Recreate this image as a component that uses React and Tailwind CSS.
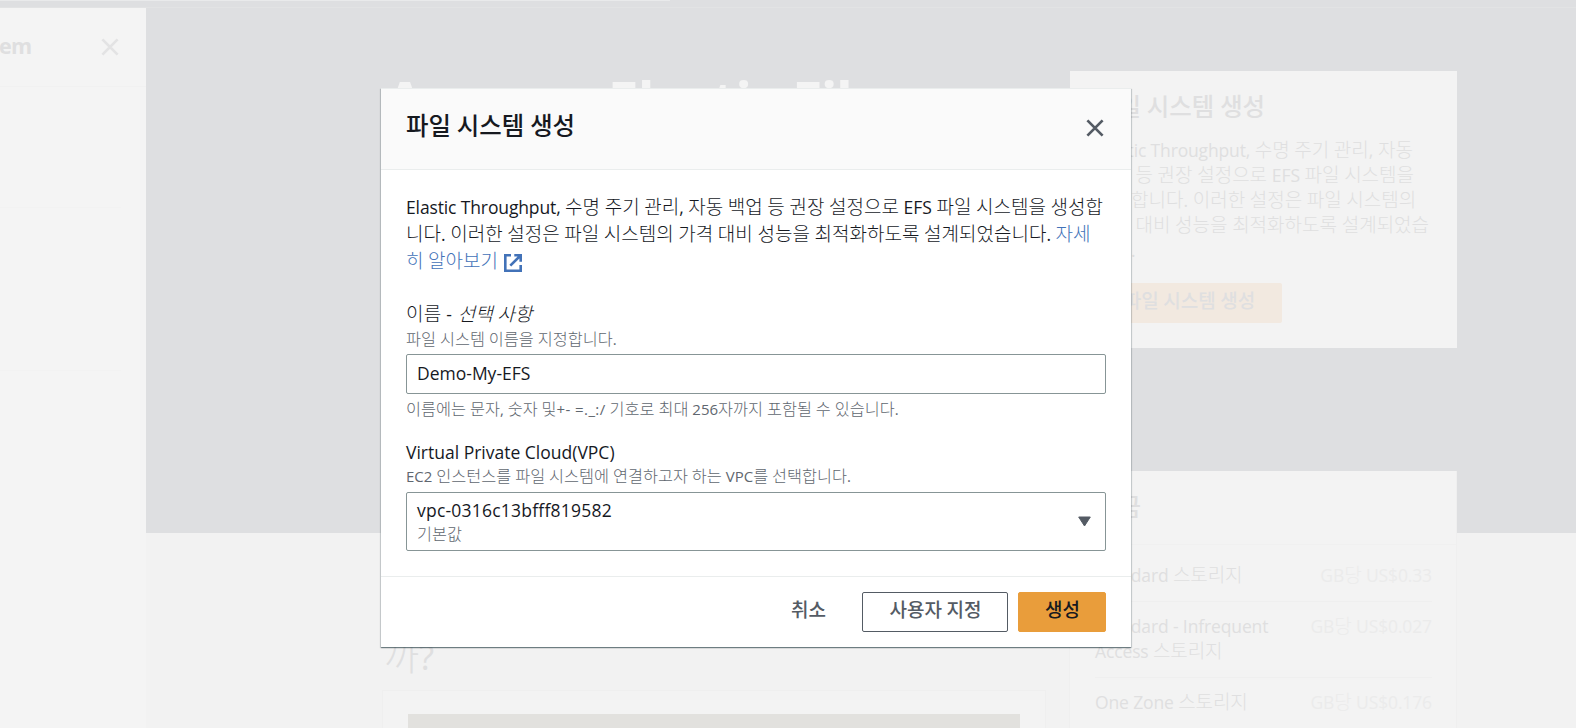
import React from 'react';

const HANGUL = /([\uac00-\ud7a3]+)/;

// Sets Hangul runs in a slightly larger CJK face so they balance with the Latin text.
function T({ children, bold = false }) {
  return children.split(HANGUL).map((run, i) =>
    HANGUL.test(run) ? (
      <span
        key={i}
        className={
          bold
            ? "font-['Noto_Sans_CJK_KR',sans-serif] text-[1.087em] leading-[0] font-medium"
            : "font-['Noto_Sans_CJK_KR',sans-serif] text-[1.087em] leading-[0] font-light"
        }
      >
        {run}
      </span>
    ) : (
      run
    )
  );
}

function CloseIcon({ className }) {
  return (
    <svg viewBox="0 0 18 18" className={className} fill="none" stroke="currentColor" strokeWidth="2.7">
      <path d="M1.4 1.4l15.2 15.2M16.6 1.4L1.4 16.6" />
    </svg>
  );
}

function ExternalIcon() {
  return (
    <svg viewBox="0 0 18 18" className="mt-[3px] ml-[6px] h-[18px] w-[18px] shrink-0" fill="none" stroke="#4272b8" strokeWidth="2.6">
      <path d="M7 1.3H1.3v15.4h15.4V11M10.3 1.3h6.4v6.4M16.5 1.5L6.3 11.7" />
    </svg>
  );
}

const INTRO = [
  '백업 등 권장 설정으로 EFS 파일 시스템을',
  '생성합니다. 이러한 설정은 파일 시스템의',
  '가격 대비 성능을 최적화하도록 설계되었습',
  '니다.',
];

function Background() {
  return (
    <div className="flex h-full flex-col">
      <div className="h-2 shrink-0 border-b border-[#e2e3e4] bg-[#dedfe1]">
        <div className="h-px w-[670px] bg-[#e9eaeb]" />
      </div>
      <div className="flex min-h-0 flex-1">
        <aside className="w-[146px] shrink-0 bg-[#f4f4f4] text-[#dfdfe0]">
          <div className="flex h-[79px] items-start justify-between border-b border-[#f1f1f1] pr-[27px]">
            <span className="mt-[23px] -ml-px text-[21.5px] leading-[30px] font-bold tracking-[-0.6px]">em</span>
            <CloseIcon className="mt-[30px] h-[18px] w-[18px] text-[#e3e3e4]" />
          </div>
          <div className="h-[121px] w-[121px] border-b border-[#f2f2f2]" />
          <div className="h-[163px] w-[121px] border-b border-[#f2f2f2]" />
        </aside>
        <main className="min-w-0 flex-1 bg-[linear-gradient(#dedfe1_525px,#f2f2f2_525px)]">
          <div className="flex pl-[236px]">
            <section className="w-[664px] shrink-0">
              <h1 className="pt-[61px] pl-[4px] text-[55px] leading-[64px] font-bold tracking-[-0.9px] whitespace-nowrap text-[#f4f4f4]">
                <span className="tracking-[-2.1px]">Amazon </span>
                Elastic <span className="tracking-[-1.5px]">File</span>
              </h1>
              <h2 className="mt-[501px] pl-[2px] text-[35px] leading-[46px] text-[#dfdfe0]">
                <T>까?</T>
              </h2>
              <div className="mt-[10px] h-[60px] border border-[#efefef] bg-[#f3f3f3] px-[25px] pt-[23px]">
                <div className="h-[40px] w-[612px] bg-[#e2e1de]" />
              </div>
            </section>
            <section className="mt-[63px] ml-[23px] w-[388px] shrink-0 text-[17.5px] text-[#dfdfe0]">
              <div className="ml-px h-[277px] w-[387px] bg-[#f3f3f3] px-[26px] pt-[22px]">
                <h2 className="text-[22.5px] leading-[30px] font-bold">
                  <T bold>파일 시스템 생성</T>
                </h2>
                <div className="mt-[15px] leading-[25px] whitespace-nowrap">
                  <p>
                    <span className="tracking-[-0.15px]">Elastic Throughput,</span>
                    <T>{' 수명 주기 관리, 자동'}</T>
                  </p>
                  {INTRO.map((line) => (
                    <p key={line}>
                      <T>{line}</T>
                    </p>
                  ))}
                </div>
                <div className="mt-[20px] -ml-px flex h-[40px] w-[187px] justify-center rounded-[2px] bg-[#f2e9e0] pl-[2px] leading-[36px] font-bold">
                  <span>
                    <T bold>파일 시스템 생성</T>
                  </span>
                </div>
              </div>
              <div className="mt-[123px] h-[257px] border-x border-[#efefef] bg-[#f3f3f3]">
                <div className="h-[74px] border-b border-[#f0f0f0] px-[26px] pt-[22px]">
                  <h2 className="text-[22.5px] leading-[30px] font-bold">
                    <T bold>요금</T>
                  </h2>
                </div>
                <div className="pr-[24px] pl-[25px] leading-[25px] tracking-[-0.13px] whitespace-nowrap">
                  <div className="flex h-[57px] justify-between border-b border-[#efefef] pt-[18px]">
                    <span>
                      <T>Standard 스토리지</T>
                    </span>
                    <span className="text-[#ebebeb]">
                      <T>GB당 US$0.33</T>
                    </span>
                  </div>
                  <div className="flex h-[76px] justify-between border-b border-[#efefef] pt-[12px]">
                    <span>
                      Standard - Infrequent
                      <br />
                      <T>Access 스토리지</T>
                    </span>
                    <span className="text-[#ebebeb]">
                      <T>GB당 US$0.027</T>
                    </span>
                  </div>
                  <div className="flex justify-between pt-[12px]">
                    <span>
                      <T>One Zone 스토리지</T>
                    </span>
                    <span className="text-[#ebebeb]">
                      <T>GB당 US$0.176</T>
                    </span>
                  </div>
                </div>
              </div>
            </section>
          </div>
        </main>
      </div>
    </div>
  );
}

function Modal() {
  return (
    <div
      role="dialog"
      className="absolute top-[88px] left-[381px] flex h-[559px] w-[750px] flex-col border-t border-[#eaeded] bg-white text-[17.5px] text-[#16191f] shadow-[0_1px_1px_0_rgba(0,28,36,0.4),1px_1px_1px_0_rgba(0,28,36,0.13),-1px_1px_1px_0_rgba(0,28,36,0.13)]"
    >
      <header className="flex h-[81px] shrink-0 items-start justify-between border-b border-[#eaeded] bg-[#fafafa] pr-[27px] pl-[25px]">
        <h2 className="mt-[23px] text-[22.5px] leading-[30px] font-bold">
          <T bold>파일 시스템 생성</T>
        </h2>
        <button type="button" className="mt-[30px] h-[18px] w-[18px] text-[#545b64]">
          <CloseIcon className="h-[18px] w-[18px]" />
        </button>
      </header>

      <div className="flex flex-1 flex-col px-[25px] pt-[24px]">
        <div className="leading-[27px] whitespace-nowrap">
          <p>
            <span className="tracking-[-0.13px]">Elastic Throughput,</span>
            <T>{' 수명 주기 관리, 자동 백업 등 권장 설정으로 EFS 파일 시스템을 생성합'}</T>
          </p>
          <p>
            <T>니다. 이러한 설정은 파일 시스템의 가격 대비 성능을 최적화하도록 설계되었습니다. </T>
            <a className="text-[#4272b8]">
              <T>자세</T>
            </a>
          </p>
          <p className="flex h-[27px] items-center text-[#4272b8]">
            <span>
              <T>히 알아보기</T>
            </span>
            <ExternalIcon />
          </p>
        </div>

        <label className="mt-[28px] leading-[22px] tracking-[0.2px]">
          <T>이름 - </T>
          <em className="ml-px tracking-normal">
            <T>선택 사항</T>
          </em>
        </label>
        <p className="mt-[3px] text-[15px] leading-[22px] text-[#5f676f]">
          <T>파일 시스템 이름을 지정합니다.</T>
        </p>
        <div className="mt-[4px] flex h-[40px] items-center rounded-[2px] border border-[#879596] px-[10px] pb-[2px]">Demo-My-EFS</div>
        <p className="mt-[4px] text-[15px] leading-[22px] text-[#5f676f]">
          <T>이름에는 문자, 숫자 및</T>
          <span className="tracking-[0.4px]">+- =._:/</span>
          <T> 기호로 최대 256자까지 포함될 수 있습니다.</T>
        </p>

        <label className="mt-[21px] leading-[22px]">Virtual Private Cloud(VPC)</label>
        <p className="mt-[2px] text-[15px] leading-[22px] text-[#5f676f]">
          <T>EC2 인스턴스를 파일 시스템에 연결하고자 하는 VPC를 선택합니다.</T>
        </p>
        <div className="mt-[5px] flex h-[59px] items-center justify-between rounded-[2px] border border-[#879596] pr-[14px] pl-[10px]">
          <div>
            <div className="h-[23px] leading-[23px] tracking-[0.22px]">vpc-0316c13bfff819582</div>
            <div className="mt-px text-[15px] leading-[22px] text-[#5f676f]">
              <T>기본값</T>
            </div>
          </div>
          <svg viewBox="0 0 13 11" className="h-[11px] w-[13px]" fill="#545b64" stroke="#545b64" strokeLinejoin="round">
            <path d="M.7 1h11.6L6.5 10z" />
          </svg>
        </div>
      </div>

      <footer className="flex h-[71px] shrink-0 items-start justify-end border-t border-[#eaeded] px-[25px] pt-[15px] leading-[34px] font-bold">
        <button type="button" className="flex h-[40px] px-[36px] pt-px text-[#545b64]">
          <span>
            <T bold>취소</T>
          </span>
        </button>
        <button type="button" className="flex h-[40px] w-[146px] justify-center rounded-[2px] border border-[#545b64] pl-px text-[#545b64]">
          <span>
            <T bold>사용자 지정</T>
          </span>
        </button>
        <button type="button" className="ml-[10px] flex h-[40px] w-[88px] justify-center rounded-[2px] border border-[#e99d3b] bg-[#e99d3b] pl-px text-[#16191f]">
          <span>
            <T bold>생성</T>
          </span>
        </button>
      </footer>
    </div>
  );
}

export default function App() {
  return (
    <div className="relative h-[728px] w-[1576px] overflow-hidden bg-[#f2f2f2] font-['Open_Sans','Noto_Sans_CJK_KR',sans-serif]">
      <Background />
      <Modal />
    </div>
  );
}
